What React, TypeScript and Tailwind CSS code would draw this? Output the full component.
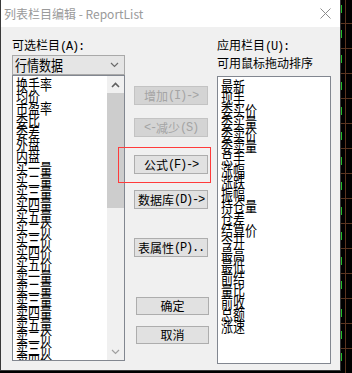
import React from 'react';

const leftItems = [
  '换手率', '均价', '市盈率', '委比', '委差', '外盘', '内盘',
  '买一量', '买二量', '买三量', '买四量', '买五量',
  '买二价', '买三价', '买四价', '买五价',
  '卖一量', '卖二量', '卖三量', '卖四量', '卖五量',
  '卖二价', '卖三价', '卖四价',
];

const rightItems = [
  '最新', '现手', '委买价', '委买量', '委卖价', '委卖量', '总手', '涨幅', '涨跌', '振幅', '持仓量',
  '仓差', '结算价', '今开', '最高', '最低', '前结', '量比', '前收', '总额', '涨速',
];

// half-width characters are 6px wide, like the old bitmap font
const Txt = ({ s }: { s: string }) => {
  const parts = s.split(/([\x20-\x7e]+)/).filter(Boolean);
  return (
    <>
      {parts.map((p, i) =>
        /^[\x20-\x7e]+$/.test(p) ? (
          <span key={i} className="font-['Liberation_Mono',monospace] tracking-[-1.2px]">
            {p}
          </span>
        ) : (
          <span key={i}>{p}</span>
        ),
      )}
    </>
  );
};

const Btn = ({ label, disabled, className }: { label: string; disabled?: boolean; className: string }) => (
  <div
    className={
      disabled
        ? `flex items-center justify-center border border-[#c3c3c3] bg-[#d4d4d4] text-[12px] leading-[14px] text-[#a4a4a4] ${className}`
        : `flex items-center justify-center border border-[#adadad] bg-[#e1e1e1] text-[12px] leading-[14px] text-black ${className}`
    }
  >
    <Txt s={label} />
  </div>
);

const Item = ({ text }: { text: string }) => (
  <div className="h-[12px] origin-top scale-y-[1.25] whitespace-nowrap text-[12px] leading-[12px] text-black">{text}</div>
);

const Chevron = ({ up, color }: { up?: boolean; color: string }) => (
  <svg width="9" height="6" viewBox="0 0 9 6">
    <polyline
      points={up ? '1,5 4.5,1.5 8,5' : '1,1 4.5,4.5 8,1'}
      fill="none"
      stroke={color}
      strokeWidth={up ? 1.6 : 1.2}
    />
  </svg>
);

export default function App() {
  const greens = [5, 30, 55, 82, 107, 132, 157, 182, 207, 232, 257, 281, 309, 331, 353];
  const browns = [23, 48, 73, 98, 123, 148, 173, 198, 223, 248, 273, 298, 323, 348];

  return (
    <div className="relative flex h-[373px] w-[352px] overflow-hidden bg-black font-['Noto_Sans_CJK_SC',sans-serif]">
      {/* dialog */}
      <div className="flex h-[371px] w-[341px] flex-col border border-t-0 border-[#3a3a3a] bg-[#f0f0f0]">
        <div className="flex h-[27px] items-center justify-between bg-white pl-[3px] pr-[9px]">
          <span className="text-[12px] leading-[14px] text-[#9a9a9a]">列表栏目编辑 - ReportList</span>
          <svg width="11" height="11" viewBox="0 0 11 11">
            <path d="M0.5 0.5 L10.5 10.5 M10.5 0.5 L0.5 10.5" stroke="#8c8c8c" strokeWidth="1" />
          </svg>
        </div>

        <div className="flex flex-1 pl-[11px]">
          {/* available columns */}
          <div className="flex w-[113px] flex-col pt-[10px]">
            <div className="h-[16px] text-[12px] leading-[16px] text-black">
              <Txt s="可选栏目(A):" />
            </div>
            <div className="mt-[2px] flex h-[20px] items-center justify-between border border-[#a9a9a9] bg-[#e5e5e5] pl-[2px] pr-[5px]">
              <span className="origin-center scale-y-[1.2] text-[12px] leading-[14px] text-black">行情数据</span>
              <Chevron color="#6a6a6a" />
            </div>
            <div className="flex h-[286px] border border-[#828790] bg-white">
              <div className="flex-1 overflow-hidden pl-[3px]">
                {leftItems.map((t, i) => (
                  <Item key={i} text={t} />
                ))}
              </div>
              <div className="flex w-[17px] flex-col bg-[#f0f0f0]">
                <div className="flex h-[17px] items-center justify-center">
                  <Chevron up color="#606060" />
                </div>
                <div className="h-[115px] bg-[#cdcdcd]" />
                <div className="flex-1" />
                <div className="flex h-[17px] items-center justify-center">
                  <Chevron color="#a0a0a0" />
                </div>
              </div>
            </div>
          </div>

          {/* buttons */}
          <div className="ml-[9px] flex w-[75px] flex-col">
            <Btn label="增加(I)->" disabled className="mt-[59px] h-[19px] w-[74px]" />
            <Btn label="<-减少(S)" disabled className="mt-[13px] h-[19px] w-[74px]" />
            <Btn label="公式(F)->" className="mt-[18px] h-[19px] w-[74px]" />
            <Btn label="数据库(D)->" className="mt-[16px] h-[19px] w-[74px]" />
            <Btn label="表属性(P).." className="mt-[29px] h-[19px] w-[74px]" />
            <Btn label="确定" className="ml-[2px] mt-[40px] h-[18px] w-[73px]" />
            <Btn label="取消" className="ml-[2px] mt-[11px] h-[18px] w-[73px]" />
          </div>

          {/* used columns */}
          <div className="ml-[8px] flex w-[114px] flex-col pt-[10px]">
            <div className="text-[12px] leading-[15px] text-black">
              <Txt s="应用栏目(U):" />
            </div>
            <div className="text-[12px] leading-[15px] text-black">可用鼠标拖动排序</div>
            <div className="mt-[6px] h-[288px] overflow-hidden border border-[#828790] bg-white pl-[3px] pt-[1px]">
              {rightItems.map((t, i) => (
                <Item key={i} text={t} />
              ))}
            </div>
          </div>
        </div>
      </div>

      {/* chart behind the dialog */}
      <svg className="flex-1" height="373" viewBox="0 0 11 373">
        {browns.map((y) => (
          <line key={y} x1="0" y1={y + 0.5} x2="11" y2={y + 0.5} stroke="#5a3520" />
        ))}
        <line x1="4.5" y1="0" x2="4.5" y2="373" stroke="#5a3520" />
        {greens.map((y) => (
          <line key={y} x1="0.5" y1={y} x2="0.5" y2={y + 8} stroke="#22c02a" />
        ))}
      </svg>

      {/* red annotation box */}
      <div className="absolute left-[118px] top-[147px] h-[36px] w-[93px] border border-[#ff3b3b]" />
    </div>
  );
}
